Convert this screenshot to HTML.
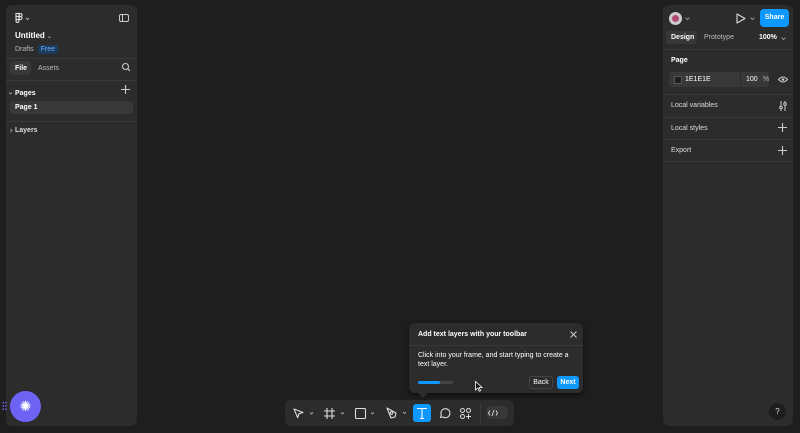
<!DOCTYPE html>
<html><head><style>
*{box-sizing:border-box;margin:0;padding:0}
body{width:800px;height:433px;background:#1e1e1e;font-family:"Liberation Sans",sans-serif;color:#fff;position:relative;overflow:hidden;font-size:7px}
.p{position:absolute;background:#2c2c2c;border-radius:6px}
.a{position:absolute}
.b{font-weight:bold}
.hr{position:absolute;height:1px;background:#3a3a3a}
.g{color:#bbb}
svg{position:absolute;overflow:visible}
</style></head><body>
<div class="p" style="left:6px;top:5px;width:131px;height:421px">
 <svg style="left:9px;top:8px" width="18" height="10"><g stroke="#ddd" stroke-width="1.1" fill="none"><rect x="1" y="0.5" width="3" height="3"/><rect x="1" y="3.5" width="3" height="3"/><rect x="1" y="6.5" width="3" height="3" rx="1.5"/><circle cx="5.5" cy="5" r="1.5"/><rect x="4" y="0.5" width="3" height="3" rx="1.5"/></g><path d="M11 5l1.5 1.5 1.5-1.5" stroke="#aaa" fill="none"/></svg>
 <div class="a" style="left:113px;top:9px;width:10px;height:8px;border:1.3px solid #ccc;border-radius:2px"><div style="width:3px;height:100%;border-right:1.2px solid #ccc"></div></div>
 <div class="a b" style="left:9px;top:26px;font-size:8px">Untitled <span style="color:#aaa;font-size:6px">⌄</span></div>
 <div class="a g" style="left:9px;top:41px;">Drafts <span style="background:#1c3b5c;color:#6ab0ff;padding:1px 3px;border-radius:2px;margin-left:2px">Free</span></div>
 <div class="hr" style="left:0;top:53px;width:131px"></div>
 <div class="a" style="left:4px;top:56px;width:21px;height:14px;background:#383838;border-radius:4px"></div>
 <div class="a b" style="left:9px;top:60px">File</div>
 <div class="a g" style="left:32px;top:60px">Assets</div>
 <svg style="left:116px;top:58px" width="9" height="9"><circle cx="3.5" cy="3.5" r="3" stroke="#ccc" stroke-width="1.1" fill="none"/><path d="M5.7 5.7L8 8" stroke="#ccc" stroke-width="1.1"/></svg>
 <div class="hr" style="left:0;top:75px;width:131px"></div>
 <svg style="left:3px;top:87px" width="4" height="3"><path d="M0 0.5l1.5 1.5 1.5-1.5" stroke="#aaa" fill="none" stroke-width="0.8"/></svg>
 <div class="a b" style="left:9px;top:85px">Pages</div>
 <svg style="left:115px;top:80px" width="9" height="9"><path d="M4.5 0v9M0 4.5h9" stroke="#ccc" stroke-width="1.1"/></svg>
 <div class="a" style="left:4px;top:96px;width:123px;height:13px;background:#383838;border-radius:3px"></div>
 <div class="a b" style="left:9px;top:99px">Page 1</div>
 <div class="hr" style="left:0;top:116px;width:131px"></div>
 <svg style="left:4px;top:124px" width="3" height="4"><path d="M0.5 0l1.5 1.5-1.5 1.5" stroke="#aaa" fill="none" stroke-width="0.8"/></svg>
 <div class="a b" style="left:9px;top:122px;color:#ddd">Layers</div>
</div>
<div class="p" style="left:663px;top:5px;width:130px;height:421px">
 <div class="a" style="left:6px;top:7px;width:13px;height:13px;border-radius:50%;background:#ccc"><div style="margin:3px;width:7px;height:7px;border-radius:50%;background:#b04a70"></div></div>
 <svg style="left:22px;top:12px" width="5" height="3"><path d="M0.5 0.5l2 2 2-2" stroke="#aaa" fill="none" stroke-width="0.8"/></svg>
 <svg style="left:73px;top:8px" width="10" height="11"><path d="M1 1l8 4.5-8 4.5z" stroke="#ddd" fill="none" stroke-width="1.1" stroke-linejoin="round"/></svg>
 <svg style="left:87px;top:12px" width="5" height="3"><path d="M0.5 0.5l2 2 2-2" stroke="#aaa" fill="none" stroke-width="0.8"/></svg>
 <div class="a b" style="left:97px;top:4px;width:29px;height:18px;background:#0d99ff;border-radius:4px;text-align:center;padding-top:5px">Share</div>
 <div class="a" style="left:3px;top:26px;width:31px;height:13px;background:#383838;border-radius:3px"></div>
 <div class="a b" style="left:8px;top:29px">Design</div>
 <div class="a g" style="left:41px;top:29px">Prototype</div>
 <div class="a b" style="left:96px;top:29px">100%</div>
 <svg style="left:118px;top:32px" width="5" height="3"><path d="M0.5 0.5l2 2 2-2" stroke="#aaa" fill="none" stroke-width="0.8"/></svg>
 <div class="hr" style="left:0;top:44px;width:130px"></div>
 <div class="a b" style="left:8px;top:52px">Page</div>
 <div class="a" style="left:6px;top:67px;width:100px;height:15px;background:#383838;border-radius:3px"><div style="position:absolute;left:71px;top:0;width:1px;height:15px;background:#2c2c2c"></div></div>
 <div class="a" style="left:11px;top:71px;width:8px;height:8px;background:#1e1e1e;border:1px solid #555"></div>
 <div class="a" style="left:22px;top:71px">1E1E1E</div>
 <div class="a" style="left:83px;top:71px">100</div><div class="a g" style="left:100px;top:71px">%</div>
 <svg style="left:115px;top:71px" width="10" height="7"><path d="M0.5 3.5Q5 -1.5 9.5 3.5Q5 8.5 0.5 3.5z" stroke="#ccc" fill="none" stroke-width="1"/><circle cx="5" cy="3.5" r="1.3" fill="#ccc"/></svg>
 <div class="hr" style="left:0;top:89px;width:130px"></div>
 <div class="a" style="left:8px;top:97px;color:#ddd">Local variables</div>
 <svg style="left:116px;top:96px" width="8" height="10"><path d="M2 0v10M6 0v10" stroke="#ccc" stroke-width="1"/><circle cx="2" cy="6.5" r="1.3" fill="#2c2c2c" stroke="#ccc"/><circle cx="6" cy="3" r="1.3" fill="#2c2c2c" stroke="#ccc"/></svg>
 <div class="hr" style="left:0;top:112px;width:130px"></div>
 <div class="a" style="left:8px;top:120px;color:#ddd">Local styles</div>
 <svg style="left:115px;top:118px" width="9" height="9"><path d="M4.5 0v9M0 4.5h9" stroke="#ccc" stroke-width="1.1"/></svg>
 <div class="hr" style="left:0;top:134px;width:130px"></div>
 <div class="a" style="left:8px;top:142px;color:#ddd">Export</div>
 <svg style="left:115px;top:141px" width="9" height="9"><path d="M4.5 0v9M0 4.5h9" stroke="#ccc" stroke-width="1.1"/></svg>
 <div class="hr" style="left:0;top:156px;width:130px"></div>
 <div class="a" style="left:106px;top:398px;width:17px;height:17px;border-radius:50%;background:#1e1e1e;text-align:center;line-height:17px;color:#ddd;font-size:8px">?</div>
</div>
<div class="a" style="left:409px;top:323px;width:174px;height:70px;background:#2c2c2c;border-radius:6px;box-shadow:0 2px 6px #0008">
 <div class="a b" style="left:9px;top:8px">Add text layers with your toolbar</div>
 <svg style="left:161px;top:8px" width="7" height="7"><path d="M0.5 0.5l6 6M6.5 0.5l-6 6" stroke="#ccc" stroke-width="1"/></svg>
 <div class="hr" style="left:0;top:22px;width:174px"></div>
 <div class="a" style="left:9px;top:28px;width:160px;line-height:9px">Click into your frame, and start typing to create a text layer.</div>
 <div class="a" style="left:9px;top:58px;width:35px;height:3px;background:#444;border-radius:2px"><div style="width:22px;height:3px;background:#0d99ff;border-radius:2px"></div></div>
 <div class="a" style="left:120px;top:53px;width:24px;height:13px;border:1px solid #444;border-radius:3px;text-align:center;line-height:11px">Back</div>
 <div class="a b" style="left:148px;top:53px;width:22px;height:13px;background:#0d99ff;border-radius:3px;text-align:center;line-height:13px">Next</div>
 <div class="a" style="left:9px;top:70px;width:0;height:0;border:5px solid transparent;border-top-color:#2c2c2c"></div>
</div>
<svg style="left:475px;top:381px" width="8" height="11"><path d="M0.5 0.5v8.5l2.2-2 1.6 3.2 1.3-.6-1.5-3.1h3z" fill="#111" stroke="#fff" stroke-width="0.8"/></svg>
<div class="a" style="left:285px;top:400px;width:229px;height:26px;background:#2c2c2c;border-radius:6px;color:#ddd">
 <svg style="left:8px;top:8px" width="30" height="11"><path d="M1 1l9 3.5-4 1.2-1.3 4z" stroke="#ddd" fill="none" stroke-width="1.1" stroke-linejoin="round"/><path d="M17 4.5l1.5 1.5 1.5-1.5" stroke="#aaa" fill="none" stroke-width="0.9"/></svg>
 <svg style="left:39px;top:8px" width="25" height="11"><path d="M3 0v11M8 0v11M0 3h11M0 8h11" stroke="#ddd" stroke-width="1.1"/><path d="M17 4.5l1.5 1.5 1.5-1.5" stroke="#aaa" fill="none" stroke-width="0.9"/></svg>
 <svg style="left:70px;top:8px" width="25" height="11"><rect x="0.5" y="0.5" width="10" height="10" rx="1" stroke="#ddd" fill="none" stroke-width="1.1"/><path d="M16 4.5l1.5 1.5 1.5-1.5" stroke="#aaa" fill="none" stroke-width="0.9"/></svg>
 <svg style="left:101px;top:7px" width="25" height="12"><path d="M1 1l4 10 4-1 1-4z" stroke="#ddd" fill="none" stroke-width="1.1" stroke-linejoin="round"/><circle cx="5.5" cy="6" r="1.3" stroke="#ddd" fill="none"/><path d="M17 5l1.5 1.5 1.5-1.5" stroke="#aaa" fill="none" stroke-width="0.9"/></svg>
 <div class="a" style="left:128px;top:4px;width:18px;height:18px;background:#0d99ff;border-radius:3px"></div>
 <svg style="left:131px;top:7px" width="12" height="12"><path d="M1 1.5h10M6 1.5v10M4 11.5h4" stroke="#fff" stroke-width="1.1"/></svg>
 <svg style="left:154px;top:8px" width="11" height="11"><path d="M1.5 9.5l0.8-2.5A4.5 4.5 0 1 1 4 9z" stroke="#ddd" fill="none" stroke-width="1.1" stroke-linejoin="round"/></svg>
 <svg style="left:175px;top:8px" width="11" height="11"><circle cx="2.5" cy="2.5" r="2" stroke="#ddd" fill="none"/><circle cx="8.5" cy="2.5" r="2" stroke="#ddd" fill="none"/><circle cx="2.5" cy="8.5" r="2" stroke="#ddd" fill="none"/><path d="M8.5 6v5M6 8.5h5" stroke="#ddd"/></svg>
 <div class="hr" style="left:195px;top:3px;width:1px;height:20px"></div>
 <div class="a" style="left:201px;top:6px;width:22px;height:13px;background:#383838;border-radius:6px"></div>
 <svg style="left:203px;top:10px" width="10" height="6"><path d="M2 0.5l-1.5 2.5 1.5 2.5M8 0.5l1.5 2.5-1.5 2.5M6 0l-2 6" stroke="#ddd" fill="none" stroke-width="0.9"/></svg>
</div>
<div class="a" style="left:10px;top:391px;width:31px;height:31px;border-radius:50%;background:#6c63f5;text-align:center;line-height:31px;font-size:14px;color:#fff">✺</div>
<div class="a" style="left:2px;top:401px;width:5px;height:10px;background:radial-gradient(circle,#6c63f5 40%,transparent 45%) 0 0/2.5px 3.3px"></div>
</body></html>
